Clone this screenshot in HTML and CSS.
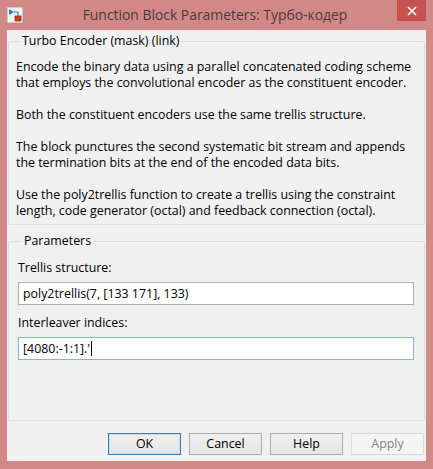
FILE: index.html
```html
<!DOCTYPE html>
<html>
<head>
<meta charset="utf-8">
<link rel="stylesheet" href="styles.css">
</head>
<body>
<div class="window">
  <div class="titlebar">
    <svg class="app-icon" width="16" height="16" viewBox="0 0 16 16">
      <rect x="0.5" y="0.5" width="15" height="15" fill="#f4f4f4" stroke="#c9c9c9"/>
      <path d="M2 2 L7 5 L2 8 Z" fill="#2f7fd0"/>
      <path d="M7 5 H11 V9" fill="none" stroke="#2f7fd0" stroke-width="1.2"/>
      <rect x="8" y="9" width="6" height="5" fill="#d83a1e" stroke="#9e2a14" stroke-width="0.8"/>
    </svg>
    <div class="title">Function Block Parameters: Турбо-кодер</div>
    <div class="close">
      <svg width="10" height="10" viewBox="0 0 10 10"><path d="M1 1 L9 9 M9 1 L1 9" stroke="#fff" stroke-width="1.6"/></svg>
    </div>
  </div>
  <div class="client">
    <fieldset class="group desc">
      <legend>Turbo Encoder (mask) (link)</legend>
      <p>Encode the binary data using a parallel concatenated coding scheme<br>that employs the convolutional encoder as the constituent encoder.</p>
      <p>Both the constituent encoders use the same trellis structure.</p>
      <p>The block punctures the second systematic bit stream and appends<br>the termination bits at the end of the encoded data bits.</p>
      <p>Use the poly2trellis function to create a trellis using the constraint<br>length, code generator (octal) and feedback connection (octal).</p>
    </fieldset>
    <fieldset class="group params">
      <legend>Parameters</legend>
      <div class="label">Trellis structure:</div>
      <div class="field">poly2trellis(7, [133 171], 133)</div>
      <div class="label">Interleaver indices:</div>
      <div class="field focus">[4080:-1:1].'<span class="caret"></span></div>
    </fieldset>
    <div class="buttons">
      <div class="btn default">OK</div>
      <div class="btn">Cancel</div>
      <div class="btn">Help</div>
      <div class="btn disabled">Apply</div>
    </div>
  </div>
</div>
</body>
</html>
```

FILE: styles.css
```css
* { box-sizing: border-box; }
html, body { margin: 0; padding: 0; }
body {
  width: 433px;
  height: 469px;
  background: #d38888;
  font-family: "Open Sans", "Noto Sans", sans-serif;
  font-size: 12.4px;
  color: #000;
  overflow: hidden;
}
.window { width: 433px; height: 469px; display: flex; flex-direction: column; }
.titlebar {
  height: 30px;
  display: flex;
  align-items: flex-start;
  position: relative;
}
.app-icon { margin: 7px 0 0 7px; flex: none; }
.title {
  flex: 1;
  text-align: center;
  font-size: 13.9px;
  line-height: 20px;
  margin-top: 5px;
  color: #4a3b3b;
  padding-left: 10px;
}
.close {
  width: 29px;
  height: 21px;
  background: #c75050;
  margin-right: 7px;
  display: flex;
  align-items: center;
  justify-content: center;
  flex: none;
}
.client {
  margin: 0 7px 0 7px;
  height: 431px;
  background: #f0f0f0;
  padding: 3px 1px 0 1px;
  display: flex;
  flex-direction: column;
}
.group {
  margin: 0;
  border: 1px solid #d5dfe5;
  border-radius: 2px;
  padding: 0 0 0 7px;
  min-width: 0;
}
.group legend {
  padding: 0 2px;
  margin-left: 4px;
  line-height: 16px;
  font-size: 12.4px;
}
.desc { height: 192px; padding-top: 10px; }
.desc p { margin: 0 0 16px 0; line-height: 16px; white-space: nowrap; }
.desc p:last-child { margin-bottom: 0; }
.params { margin-top: 8px; height: 188px; padding: 11px 10px 0 9px; }
.label { line-height: 16px; margin-bottom: 6px; }
.field {
  height: 23px;
  border: 1px solid #abadb3;
  background: #fff;
  padding: 0 4px;
  line-height: 21px;
  margin-bottom: 10px;
  white-space: nowrap;
}
.field.focus { border-color: #7eb4ea; }
.caret {
  display: inline-block;
  width: 1px;
  height: 15px;
  background: #000;
  vertical-align: -3px;
  margin-left: 1px;
}
.buttons {
  display: flex;
  justify-content: flex-end;
  gap: 8px;
  margin-top: 12px;
  padding-right: 1px;
}
.btn {
  width: 73px;
  height: 22px;
  border: 1px solid #acacac;
  background: linear-gradient(#f0f0f0, #e5e5e5);
  text-align: center;
  line-height: 20px;
  font-size: 12.4px;
}
.btn.default { border-color: #3c7fb1; box-shadow: inset 0 0 0 1px #c5ddf2; }
.btn.disabled { color: #838383; border-color: #d9d9d9; background: #f4f4f4; }
```
